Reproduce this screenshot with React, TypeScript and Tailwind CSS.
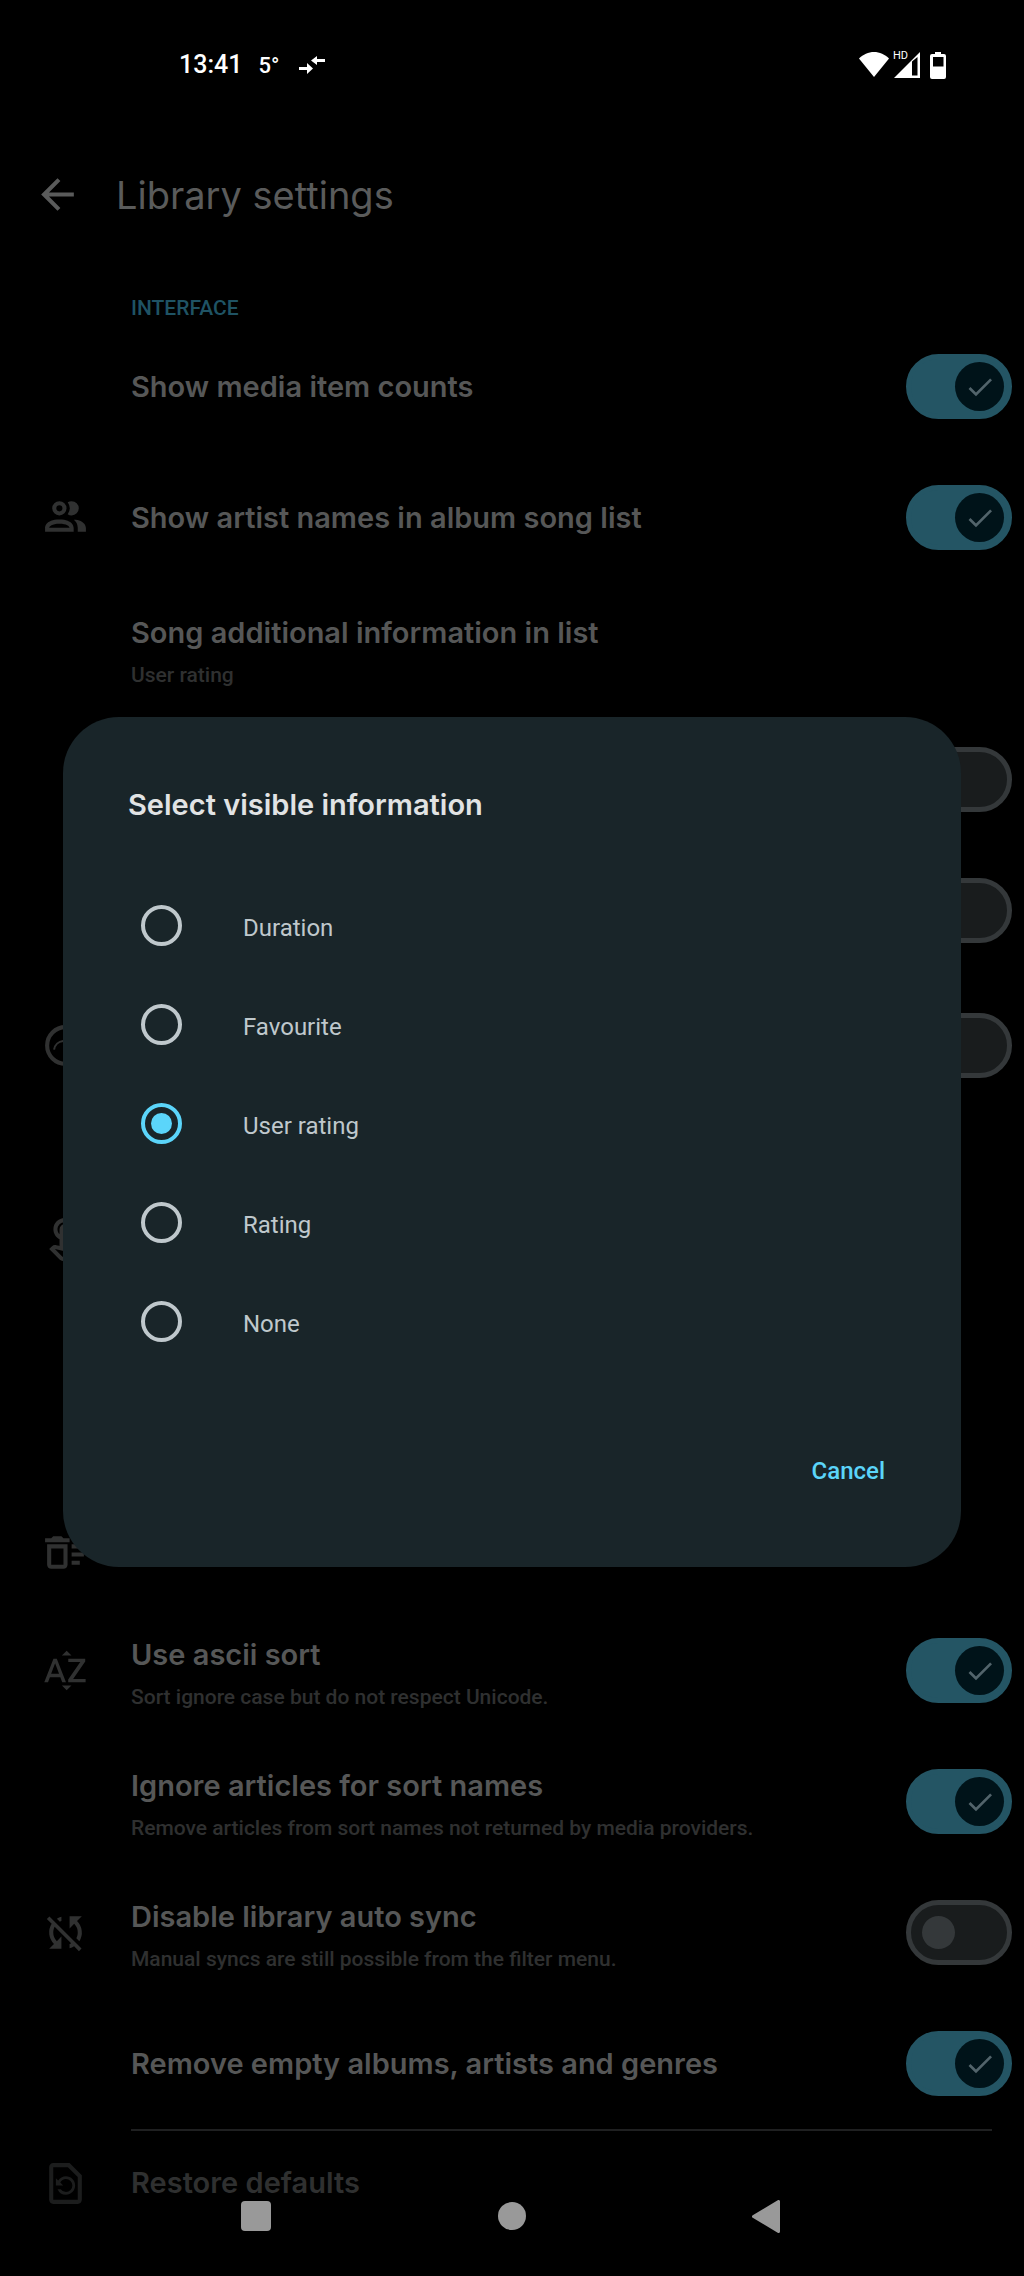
import React, { useState } from 'react';
import {
  MdArrowBack,
  MdCheck,
  MdOutlineDeleteSweep,
  MdOutlineRestorePage,
  MdOutlineTouchApp,
  MdSortByAlpha,
  MdSyncDisabled
} from 'react-icons/md';

type Setting = {
  id: string;
  height: string;
  icon?: React.ReactNode;
  title?: string;
  summary?: string;
  label?: string;
  checked?: boolean;
};

const PeopleIcon: React.FC = () => (
  <svg width="49" height="49" viewBox="0 0 24 24" fill="currentColor">
    <path d="M13.07 10.41a5 5 0 0 0 0-5.82A3.39 3.39 0 0 1 15 4a3.5 3.5 0 0 1 0 7 3.39 3.39 0 0 1-1.93-.59M5.5 7.5A3.5 3.5 0 1 1 9 11a3.5 3.5 0 0 1-3.5-3.5m2 0A1.5 1.5 0 1 0 9 6a1.5 1.5 0 0 0-1.5 1.5M16 17v2H2v-2s0-4 7-4 7 4 7 4m-2 0c-.14-.78-1.33-2-5-2s-4.93 1.31-5 2m11.95-4A5.32 5.32 0 0 1 18 17v2h4v-2s0-3.63-6.06-4" />
  </svg>
);

const ArcCircleIcon: React.FC = () => (
  <svg width="49" height="49" viewBox="0 0 24 24" fill="none" stroke="currentColor">
    <circle cx="12" cy="12" r="9" strokeWidth="2" />
    <path d="M6.4 14a5 5 0 0 1 9.6-1" strokeWidth="1" />
  </svg>
);

const settings: Setting[] = [
  { id: 'counts', height: 'h-[131px]', title: 'Show media item counts', checked: true },
  { id: 'artists', height: 'h-[131px]', icon: <PeopleIcon />, title: 'Show artist names in album song list', checked: true },
  { id: 'info', height: 'h-[131px]', title: 'Song additional information in list', summary: 'User rating' },
  { id: 'covers', height: 'h-[131px]', label: 'Show covers', checked: false },
  { id: 'headers', height: 'h-[131px]', label: 'Show headers', checked: false },
  { id: 'played', height: 'h-[138px]', icon: <ArcCircleIcon />, label: 'Show played state', checked: false },
  { id: 'tap', height: 'h-[252px]', icon: <MdOutlineTouchApp size={49} /> },
  { id: 'spacer', height: 'h-[134px]' },
  { id: 'clean', height: 'h-[105px]', icon: <MdOutlineDeleteSweep size={49} /> },
  { id: 'ascii', height: 'h-[131px]', icon: <MdSortByAlpha size={49} />, title: 'Use ascii sort', summary: 'Sort ignore case but do not respect Unicode.', checked: true },
  { id: 'articles', height: 'h-[131px]', title: 'Ignore articles for sort names', summary: 'Remove articles from sort names not returned by media providers.', checked: true },
  { id: 'sync', height: 'h-[131px]', icon: <MdSyncDisabled size={49} />, title: 'Disable library auto sync', summary: 'Manual syncs are still possible from the filter menu.', checked: false },
  { id: 'empty', height: 'h-[131px]', title: 'Remove empty albums, artists and genres', checked: true }
];

const options = ['Duration', 'Favourite', 'User rating', 'Rating', 'None'];

const StatusBar: React.FC = () => (
  <div className="flex h-[130px] items-center justify-between pl-[179px] pr-[78px] text-white">
    <div className="flex items-center">
      <span className="text-[25px] font-medium">13:41</span>
      <span className="ml-4 text-[22px] font-medium">5°</span>
      <svg className="ml-5" width="26" height="18" viewBox="0 0 26 18" fill="currentColor">
        <path d="M0 11h8V7l6 5.500-6 5.500V14H0zM26 3h-8V0l-6 4.500L18 9V6h8z" />
      </svg>
    </div>
    <div className="flex items-center">
      <svg width="30" height="28" viewBox="0 0 30 28" fill="currentColor">
        <path d="M15 26L0 7.500C4 3.500 9.500 1 15 1s11 2.500 15 6.500z" />
      </svg>
      <span className="relative ml-[5px]">
        <svg width="26" height="28" viewBox="0 0 26 28">
          <path fill="currentColor" fillRule="evenodd" d="M0 27L26 1v26zM18 10.500V24.500h5.500V6z" />
        </svg>
        <span className="absolute -left-px -top-px text-[11px] leading-[11px]">HD</span>
      </span>
      <svg className="ml-[10px]" width="16" height="28" viewBox="0 0 16 28">
        <path fill="currentColor" fillRule="evenodd" d="M5 1h6v2h3q2 0 2 2v21q0 2-2 2H2q-2 0-2-2V5q0-2 2-2h3zM3 6v9.500h10.500V6z" />
      </svg>
    </div>
  </div>
);

const Toggle: React.FC<{ id: string; label?: string; defaultChecked: boolean }> = ({ id, label, defaultChecked }) => {
  const [on, setOn] = useState(defaultChecked);

  return (
    <span className="relative h-[65px] w-[106px] shrink-0">
      <input
        id={id}
        type="checkbox"
        role="switch"
        aria-label={label}
        checked={on}
        onChange={() => setOn(!on)}
        className="block h-full w-full appearance-none rounded-full border-[5px] border-[#34383a] bg-[#191c1d] checked:border-[#245564] checked:bg-[#245564]"
      />
      {on ? (
        <span className="pointer-events-none absolute right-2 top-2 flex h-[49px] w-[49px] items-center justify-center rounded-full bg-[#001319] text-[#52646b]">
          <MdCheck size={32} />
        </span>
      ) : (
        <span className="pointer-events-none absolute left-4 top-4 h-[33px] w-[33px] rounded-full bg-[#34383a]"></span>
      )}
    </span>
  );
};

const SettingRow: React.FC<{ setting: Setting }> = ({ setting }) => (
  <div className={`flex items-center pr-3 ${setting.height}`}>
    <div className="flex w-[131px] shrink-0 pl-[41px] text-[#303131]">{setting.icon}</div>
    <div className={setting.summary ? 'flex-1 pt-1' : 'flex-1'}>
      {setting.title && (
        <label htmlFor={setting.id} className="block font-[Inter] text-[29px] font-semibold leading-[48px] text-[#565757]">
          {setting.title}
        </label>
      )}
      {setting.summary && <p className="text-[21px] font-medium leading-9 text-[#2f3030]">{setting.summary}</p>}
    </div>
    {setting.checked !== undefined && <Toggle id={setting.id} label={setting.label} defaultChecked={setting.checked} />}
  </div>
);

const VisibleInfoDialog: React.FC = () => {
  const [selected, setSelected] = useState('User rating');

  return (
    <div className="absolute inset-0 flex items-center px-[63px] pt-2">
      <div role="dialog" aria-labelledby="dialog-title" className="w-full rounded-[56px] bg-[#192529] pb-16 pt-[68px]">
        <h2 id="dialog-title" className="px-[65px] font-[Inter] text-[29px] font-semibold leading-10 text-[#e1e3e4]">
          Select visible information
        </h2>
        <div className="mt-[51px]">
          {options.map((option) => (
            <label key={option} className="flex h-[99px] items-center pl-[78px] text-[24px] text-[#bfc8cc]">
              <input
                type="radio"
                name="visible-info"
                checked={selected === option}
                onChange={() => setSelected(option)}
                className="flex h-[41px] w-[41px] appearance-none items-center justify-center rounded-full border-4 border-[#bfc8cc] checked:border-[#5bd5fa] checked:before:h-[21px] checked:before:w-[21px] checked:before:rounded-full checked:before:bg-[#5bd5fa] checked:before:content-['']"
              />
              <span className="pl-[61px] pt-1">{option}</span>
            </label>
          ))}
        </div>
        <div className="mt-[68px] flex justify-end pr-[52px]">
          <button type="button" className="h-16 px-6 text-[24px] font-medium text-[#5bd5fa]">
            Cancel
          </button>
        </div>
      </div>
    </div>
  );
};

const NavigationBar: React.FC = () => (
  <nav className="absolute inset-x-0 bottom-0 grid h-[120px] grid-cols-3 items-center justify-items-center px-[12.5%] text-[#999999]">
    <button type="button" aria-label="Recent apps" className="h-[30px] w-[30px] rounded-sm bg-current"></button>
    <button type="button" aria-label="Home" className="h-7 w-7 rounded-full bg-current"></button>
    <button type="button" aria-label="Back" className="pr-1">
      <svg width="28" height="33" viewBox="0 0 28 33" fill="currentColor" stroke="currentColor" strokeWidth="3" strokeLinejoin="round">
        <path d="M26.500 1.500v30L1.500 16.500z" />
      </svg>
    </button>
  </nav>
);

const App: React.FC = () => {
  return (
    <div className="relative min-h-screen overflow-hidden bg-black font-[Roboto]">
      <StatusBar />

      <header className="flex h-[129px] items-center pl-[33px] text-[#5a5b5b]">
        <button type="button" aria-label="Back">
          <MdArrowBack size={49} />
        </button>
        <h1 className="pl-[34px] font-[Inter] text-[38px] leading-[48px]">Library settings</h1>
      </header>

      <main>
        <h2 className="flex h-[62px] items-end pl-[131px] text-[21px] font-medium leading-[50px] text-[#1f5364]">
          <span className="-mb-3">INTERFACE</span>
        </h2>
        {settings.map((setting) => (
          <SettingRow key={setting.id} setting={setting} />
        ))}
        <hr className="ml-[131px] mr-8 border-t-2 border-[#1f2021]" />
        <div className="flex h-[104px] items-center">
          <div className="w-[131px] shrink-0 pl-[41px] text-[#1c1d1d]">
            <MdOutlineRestorePage size={49} />
          </div>
          <button type="button" className="font-[Inter] text-[29px] font-semibold text-[#2f3030]">
            Restore defaults
          </button>
        </div>
      </main>

      <VisibleInfoDialog />
      <NavigationBar />
    </div>
  );
};

export default App;
